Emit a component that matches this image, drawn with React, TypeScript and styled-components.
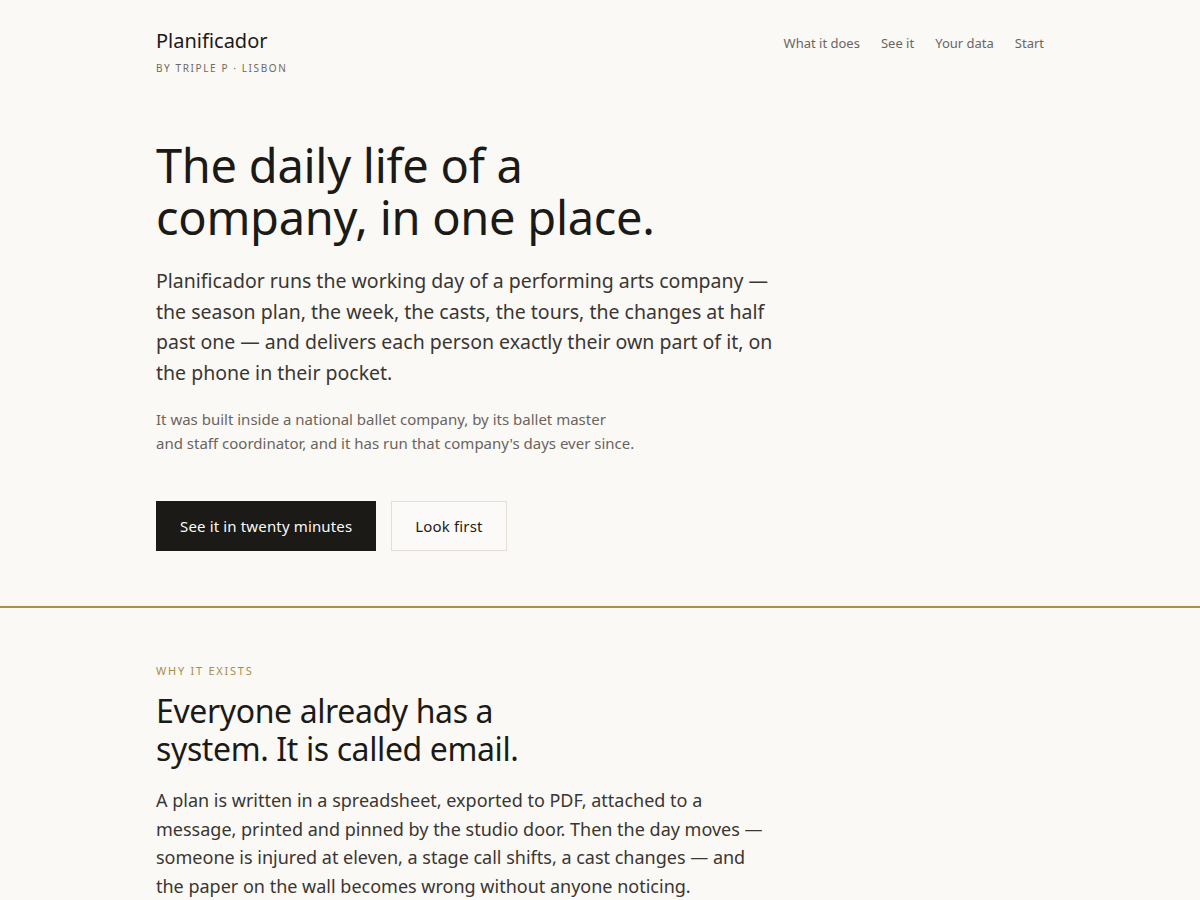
import React from "react";
import styled, { createGlobalStyle } from "styled-components";

const Global = createGlobalStyle`
  html, body { margin: 0; padding: 0; background: #faf9f6; }
  body { font-family: "Noto Sans", "Open Sans", sans-serif; color: #1c1a17; -webkit-font-smoothing: antialiased; }
  * { box-sizing: border-box; }
`;

const Container = styled.div`
  width: 888px;
  margin: 0 auto;
`;

const Header = styled.header`
  display: flex;
  justify-content: space-between;
  align-items: flex-start;
  padding-top: 28px;
`;

const Brand = styled.div`
  display: flex;
  flex-direction: column;
`;

const BrandName = styled.div`
  font-size: 20px;
  line-height: 26px;
  color: #1c1a17;
`;

const BrandSub = styled.div`
  margin-top: 7px;
  font-size: 10px;
  letter-spacing: 0.16em;
  text-transform: uppercase;
  color: #6f6963;
`;

const Nav = styled.nav`
  display: flex;
  gap: 21px;
  padding-top: 6px;
`;

const NavLink = styled.a`
  font-size: 13px;
  line-height: 18px;
  color: #6b655f;
  text-decoration: none;
`;

const Hero = styled.section`
  padding: 64px 0 55px;
`;

const H1 = styled.h1`
  margin: 0;
  max-width: 560px;
  font-size: 47px;
  line-height: 52px;
  font-weight: 400;
  letter-spacing: -0.006em;
  color: #1c1a17;
`;

const Lead = styled.p`
  margin: 23px 0 0;
  max-width: 620px;
  font-size: 19.5px;
  line-height: 30.5px;
  color: #3a3631;
`;

const Note = styled.p`
  margin: 19px 0 0;
  max-width: 500px;
  font-size: 15px;
  line-height: 24px;
  color: #6b645d;
`;

const Actions = styled.div`
  display: flex;
  gap: 15px;
  margin-top: 46px;
`;

const Button = styled.a<{ $primary?: boolean }>`
  display: inline-flex;
  align-items: center;
  height: 50px;
  padding: 0 23px;
  font-size: 15px;
  letter-spacing: 0.01em;
  text-decoration: none;
  color: ${(p) => (p.$primary ? "#faf9f6" : "#1c1a17")};
  background: ${(p) => (p.$primary ? "#1c1a17" : "#fcfaf8")};
  border: 1px solid ${(p) => (p.$primary ? "#1c1a17" : "#e6dcd8")};
`;

const Rule = styled.hr`
  margin: 0;
  border: 0;
  height: 2px;
  background: #ad8f4a;
`;

const Section = styled.section`
  padding-top: 55px;
`;

const Eyebrow = styled.div`
  font-size: 11px;
  letter-spacing: 0.16em;
  text-transform: uppercase;
  color: #a88b48;
`;

const H2 = styled.h2`
  margin: 14px 0 0;
  max-width: 400px;
  font-size: 32px;
  line-height: 38px;
  font-weight: 400;
  letter-spacing: -0.012em;
  color: #1c1a17;
`;

const Body = styled.p`
  margin: 18px 0 0;
  max-width: 620px;
  font-size: 18px;
  line-height: 28.7px;
  color: #3a3631;
`;

export default function App() {
  return (
    <>
      <Global />
      <Container>
        <Header>
          <Brand>
            <BrandName>Planificador</BrandName>
            <BrandSub>By Triple P · Lisbon</BrandSub>
          </Brand>
          <Nav>
            <NavLink href="#">What it does</NavLink>
            <NavLink href="#">See it</NavLink>
            <NavLink href="#">Your data</NavLink>
            <NavLink href="#">Start</NavLink>
          </Nav>
        </Header>
        <Hero>
          <H1>The daily life of a company, in one place.</H1>
          <Lead>
            Planificador runs the working day of a performing arts company — the season plan, the week, the casts,
            the tours, the changes at half past one — and delivers each person exactly their own part of it, on the
            phone in their pocket.
          </Lead>
          <Note>
            It was built inside a national ballet company, by its ballet master
            <br />
            and staff coordinator, and it has run that company's days ever since.
          </Note>
          <Actions>
            <Button $primary href="#">See it in twenty minutes</Button>
            <Button href="#">Look first</Button>
          </Actions>
        </Hero>
      </Container>
      <Rule />
      <Container>
        <Section>
          <Eyebrow>Why it exists</Eyebrow>
          <H2>Everyone already has a system. It is called email.</H2>
          <Body>
            A plan is written in a spreadsheet, exported to PDF, attached to a message, printed and pinned by the
            studio door. Then the day moves — someone is injured at eleven, a stage call shifts, a cast changes — and
            the paper on the wall becomes wrong without anyone noticing.
          </Body>
        </Section>
      </Container>
    </>
  );
}
